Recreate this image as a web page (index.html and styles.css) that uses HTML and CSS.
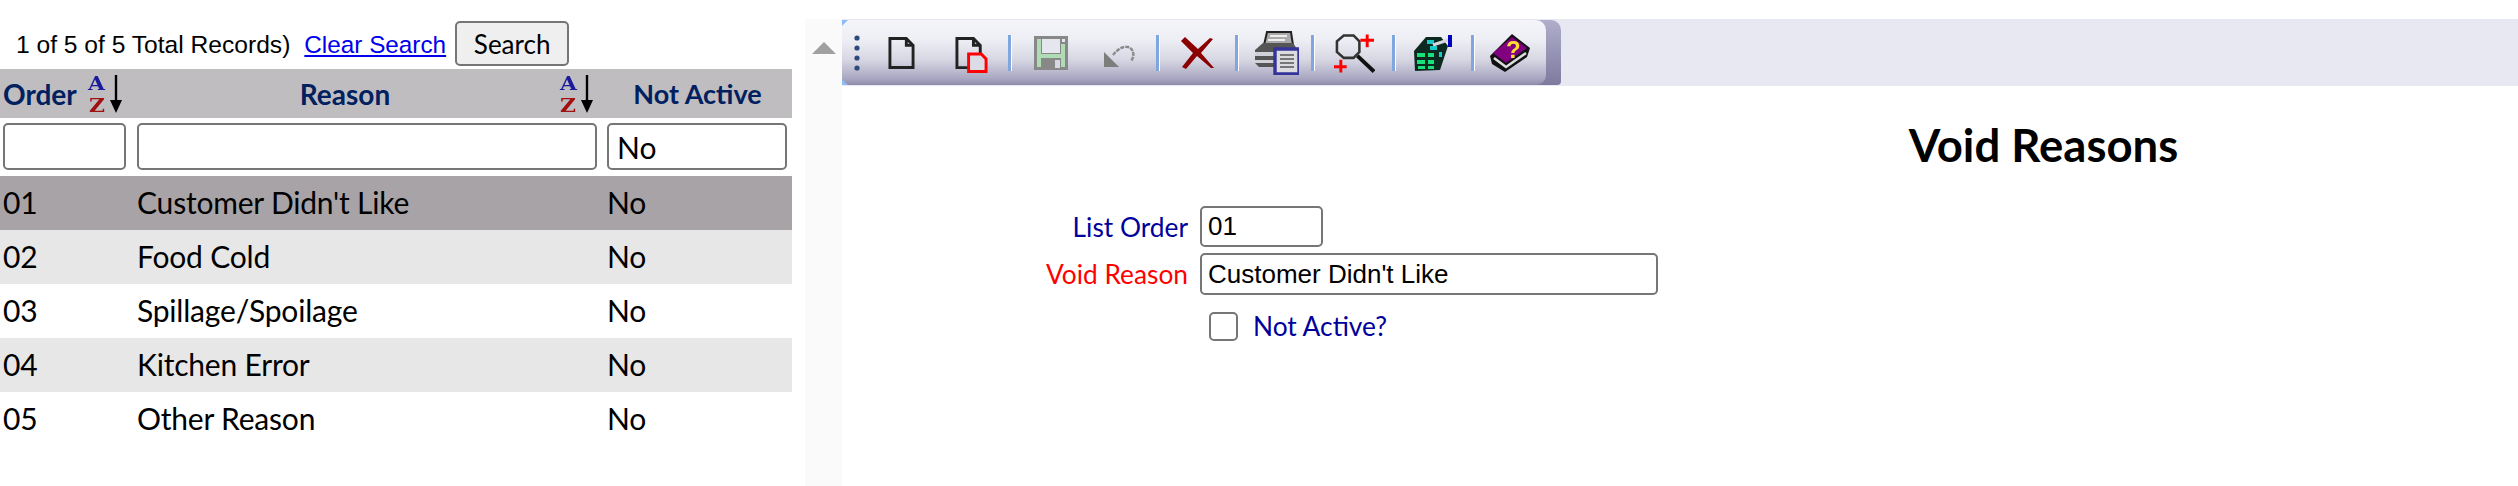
FILE: index.html
```html
<!DOCTYPE html>
<html lang="en">
<head>
  <meta charset="UTF-8" />
  <title>Void Reasons</title>
  <link rel="stylesheet" href="styles.css">
</head>
<body>

<div class="page">

  <!-- Search list -->
  <section class="list">
    <div class="status">
      <span class="count">1 of 5 of 5 Total Records)</span>
      <a href="#" class="clear">Clear Search</a>
      <button class="search-btn">Search</button>
    </div>

    <div class="row head">
      <div class="cell order-head">Order
        <span class="sort"><span class="sort-letters"><b class="sort-a">A</b><b class="sort-z">Z</b></span><svg class="sort-arrow" viewBox="0 0 14 38"><path d="M7 0V28" stroke="#000" stroke-width="2.4"/><path d="M1 25H13L7 38Z" fill="#000"/></svg></span>
      </div>
      <div class="cell reason-head"><span class="reason-text">Reason</span>
        <span class="sort"><span class="sort-letters"><b class="sort-a">A</b><b class="sort-z">Z</b></span><svg class="sort-arrow" viewBox="0 0 14 38"><path d="M7 0V28" stroke="#000" stroke-width="2.4"/><path d="M1 25H13L7 38Z" fill="#000"/></svg></span>
      </div>
      <div class="cell active-head">Not Active</div>
    </div>

    <div class="row filters">
      <input type="text" class="filter">
      <input type="text" class="filter">
      <input type="text" class="filter" value="No">
    </div>

    <div class="row item selected"><div class="cell">01</div><div class="cell">Customer Didn't Like</div><div class="cell">No</div></div>
    <div class="row item odd"><div class="cell">02</div><div class="cell">Food Cold</div><div class="cell">No</div></div>
    <div class="row item"><div class="cell">03</div><div class="cell">Spillage/Spoilage</div><div class="cell">No</div></div>
    <div class="row item odd"><div class="cell">04</div><div class="cell">Kitchen Error</div><div class="cell">No</div></div>
    <div class="row item"><div class="cell">05</div><div class="cell">Other Reason</div><div class="cell">No</div></div>
  </section>

  <!-- Scroll gutter -->
  <div class="gutter"><div class="arrow-up"></div></div>

  <!-- Detail -->
  <main class="detail">
    <div class="toolbar-band">
      <div class="toolbar">
        <div class="toolbar-face">
          <svg class="grip" viewBox="0 0 8 38"><circle cx="4" cy="4" r="2.6"/><circle cx="4" cy="14" r="2.6"/><circle cx="4" cy="24" r="2.6"/><circle cx="4" cy="34" r="2.6"/></svg>

          <svg class="tool t-new" viewBox="0 0 28 34"><path d="M2 2H19L26 9V32H2Z M19 2V9H26" fill="none" stroke="#222" stroke-width="3"/></svg>
          <svg class="tool t-copy" viewBox="0 0 34 38"><path d="M2 2H19L26 9V32H2Z M19 2V9H26" fill="none" stroke="#222" stroke-width="3"/><path d="M14 18H27L32 23V36H14Z" fill="#dcdce6" stroke="#f00" stroke-width="3"/></svg>
          <i class="sep s1"></i>
          <svg class="tool t-save" viewBox="0 0 34 34"><path d="M0 0H34V34H0Z" fill="#888"/><path d="M3 3H7V31H3Z M27 8H31V31H27Z M7 18H27V22H7Z" fill="#aedcb4"/><path d="M8 3H26V17H8Z" fill="#e6e6ef"/><path d="M28 3H31V6H28Z" fill="#e6e6ef"/><path d="M21 24H26V32H21Z" fill="#d8d8e0"/></svg>
          <svg class="tool t-undo" viewBox="0 0 32 24"><path d="M1 23V8L16 23Z" fill="#7d7d7d"/><path d="M10 11C14 6 19 2 25 3C31 5 32 12 28 17" fill="none" stroke="#8a8a8a" stroke-width="2.4" stroke-dasharray="4 1"/></svg>
          <i class="sep s2"></i>
          <svg class="tool t-del" viewBox="0 0 34 34"><path d="M4 1L17 13L29 2L32 3L20 17L33 32L30 32L16 20L5 33L1 31L12 17L0 5Z" fill="#8b0000"/></svg>
          <i class="sep s3"></i>
          <svg class="tool t-print" viewBox="0 0 44 44"><path d="M12 1H36L38 14H9Z" fill="#aaa" stroke="#222" stroke-width="2"/><path d="M15 5H32M13 9H30" stroke="#eee" stroke-width="2"/><path d="M0 19L8 12H38L42 18V36H4L0 32Z" fill="#555"/><path d="M0 21H22V25H0Z M0 29H22V32H0Z" fill="#d0d0d8"/><path d="M20 18H44V43H20Z" fill="#dcdce0" stroke="#333399" stroke-width="3.4"/><path d="M25 24H39M25 28H39M25 32H39M25 36H39" stroke="#777" stroke-width="2"/></svg>
          <i class="sep s4"></i>
          <svg class="tool t-find" viewBox="0 0 42 42"><path d="M10 3H20L26 9V20L20 26H10L3 20V9Z" fill="none" stroke="#333" stroke-width="2.6"/><path d="M24 24L41 40" stroke="#111" stroke-width="4"/><path d="M34 2V15M27 8H41" stroke="#f00" stroke-width="3"/><path d="M7 28V41M0 35H13" stroke="#f00" stroke-width="3"/></svg>
          <i class="sep s5"></i>
          <svg class="tool t-grid" viewBox="0 0 38 38"><path d="M0 17L12 3H27L34 12L26 36L1 37Z" fill="#0c2a20"/><path d="M3 19H11V23H3ZM14 19H20V23H14ZM3 26H11V30H3ZM14 26H20V30H14ZM4 32H11V35H4ZM14 32H20V35H14Z" fill="#19e07a"/><path d="M13 6H20V10H13ZM16 12H23V16H16ZM25 18H28V23H25Z" fill="#19c8c8"/><path d="M19 11L34 6" stroke="#d8d8e0" stroke-width="3"/><path d="M34 1H38V13H34Z" fill="#0000c0"/></svg>
          <i class="sep s6"></i>
          <svg class="tool t-help" viewBox="0 0 40 38"><path d="M0 22L22 0L40 14L37 23L15 38L2 30Z" fill="#111"/><path d="M3 19L22 3L37 14L16 29Z" fill="#800080"/><path d="M4 24L16 33L36 19" fill="none" stroke="#ddd" stroke-width="2.6"/><text x="16" y="24" class="help-mark">?</text></svg>
        </div>
      </div>
    </div>

    <h1 class="title">Void Reasons</h1>

    <form class="void-form">
      <label class="lbl">List Order</label>
      <input type="text" class="fld fld-order" value="01">
      <label class="lbl req">Void Reason</label>
      <input type="text" class="fld fld-reason" value="Customer Didn't Like">
      <div class="check-row">
        <input type="checkbox" class="chk">
        <label class="lbl">Not Active?</label>
      </div>
    </form>
  </main>

</div>

</body>
</html>
```

FILE: styles.css
```css
* { box-sizing: border-box; }
html, body { height: 100%; }
body {
  margin: 0;
  background: #fff;
  font-family: 'Lato', sans-serif;
  overflow: hidden;
}

.page {
  display: flex;
  height: 486px;
}

/* List side */
.list {
  width: 805px;
  padding-top: 20px;
  flex: none;
}

.status {
  display: flex;
  align-items: center;
  height: 49px;
  padding-left: 16px;
  width: 792px;
}

.count {
  font-family: 'Liberation Sans', sans-serif;
  font-size: 24.6px;
}

.clear {
  font-family: 'Liberation Sans', sans-serif;
  font-size: 24.3px;
  color: #00e;
  margin-left: 14px;
}

.search-btn {
  font-family: 'Lato', sans-serif;
  font-size: 26px;
  width: 114px;
  height: 45px;
  margin-left: 9px;
  margin-top: -2px;
  background: #efefef;
  border: 2px solid #767676;
  border-radius: 5px;
  padding: 0;
  color: #000;
}

.row {
  display: grid;
  grid-template-columns: 137px 470px 185px;
  width: 792px;
  align-items: center;
}

.cell {
  padding-left: 3px;
}

.head {
  height: 49px;
  background: #c0bdc0;
  color: #00205f;
  font-weight: bold;
  font-size: 28px;
}

.order-head {
  display: flex;
  align-items: center;
  gap: 11px;
}

.reason-head {
  display: flex;
  align-items: center;
  padding-left: 0;
}

.reason-text {
  width: 422px;
  padding-right: 6px;
  text-align: center;
}

.active-head {
  text-align: center;
  padding-left: 0;
  padding-right: 4px;
  font-size: 27px;
}

/* A-Z sort mark */
.sort {
  display: flex;
  align-items: center;
  gap: 3px;
  flex: none;
}

.sort-letters {
  display: flex;
  flex-direction: column;
  align-items: center;
  width: 18px;
}

.sort-a, .sort-z {
  font-family: 'DejaVu Serif', serif;
  font-weight: bold;
  font-size: 19px;
  line-height: 22px;
  transform: scaleX(1.15);
}

.sort-a { color: #1a1a9c; }
.sort-z { color: #a01010; }

.sort-arrow {
  width: 14px;
  height: 38px;
}

.filters {
  height: 58px;
  grid-template-columns: 134px 470px 188px;
  padding-left: 3px;
  padding-bottom: 1px;
}

.filter {
  height: 47px;
  border: 2px solid #767676;
  border-radius: 5px;
  font-family: 'Lato', sans-serif;
  font-size: 30px;
  padding: 0 8px;
}

.filters .filter:nth-child(1) { width: 123px; }
.filters .filter:nth-child(2) { width: 460px; }
.filters .filter:nth-child(3) { width: 180px; }

.item {
  height: 54px;
  font-size: 30px;
  letter-spacing: -0.2px;
  color: #000;
  padding-bottom: 2px;
}

.item .cell:nth-child(2) { padding-left: 0; }
.item .cell:nth-child(3) { padding-left: 0; }

.selected { background: #a8a3a6; }
.odd { background: #e7e7e7; }

/* Gutter */
.gutter {
  width: 37px;
  flex: none;
  margin-top: 19px;
  background: #fafafa;
  padding: 23px 0 0 7px;
}

.arrow-up {
  width: 0;
  height: 0;
  border-left: 12px solid transparent;
  border-right: 12px solid transparent;
  border-bottom: 12px solid #a0a0a0;
}

/* Detail side */
.detail {
  flex: 1;
  padding-top: 19px;
}

.toolbar-band {
  height: 67px;
  background: #e8e8f2;
  padding-top: 1px;
}

.toolbar {
  position: relative;
  width: 719px;
  height: 65px;
  background: linear-gradient(#b0aecb, #7d7a9e);
  border-radius: 2px 10px 4px 2px;
}

/* little blue corners on the left end */
.toolbar::before,
.toolbar::after {
  content: "";
  position: absolute;
  left: 0;
  width: 6px;
  height: 6px;
  background: #8ebcf2;
}

.toolbar::before { top: 0; clip-path: polygon(0 0, 100% 0, 0 100%); }
.toolbar::after { bottom: 0; clip-path: polygon(0 0, 100% 100%, 0 100%); }

.toolbar-face {
  display: flex;
  align-items: center;
  width: 704px;
  height: 100%;
  padding-left: 11px;
  background: linear-gradient(#f4f4fa 0%, #eeeef5 30%, #d8d8e4 60%, #a9a7c2 90%, #8e8cac 100%);
  border-radius: 0 10px 10px 0;
}

.grip {
  width: 8px;
  height: 38px;
  fill: #2c4a7c;
  flex: none;
}

.tool {
  flex: none;
  filter: blur(0.5px);
}

.t-new { width: 27px; height: 34px; margin-left: 27px; }
.t-copy { width: 33px; height: 38px; margin-left: 40px; margin-top: 4px; }
.t-save { width: 34px; height: 34px; margin-left: 23px; }
.t-undo { width: 32px; height: 24px; margin-left: 35px; margin-top: 6px; }
.t-del { width: 34px; height: 34px; margin-left: 22px; }
.t-print { width: 44px; height: 44px; margin-left: 17px; }
.t-find { width: 41px; height: 42px; margin-left: 20px; }
.t-grid { width: 38px; height: 38px; margin-left: 19px; }
.t-help { width: 40px; height: 38px; margin-left: 16px; }

.sep {
  width: 3px;
  height: 36px;
  flex: none;
  background: #7fa6de;
  box-shadow: 1px 0 0 #fff;
}

.s1 { margin-left: 20px; }
.s2 { margin-left: 21px; }
.s3 { margin-left: 20px; }
.s4 { margin-left: 12px; }
.s5 { margin-left: 17px; }
.s6 { margin-left: 19px; }

.help-mark {
  font-family: 'Liberation Sans', sans-serif;
  font-weight: bold;
  font-size: 24px;
  fill: #ffdd33;
}

.title {
  margin: 32px 0 0;
  padding-left: 727px;
  text-align: center;
  font-size: 45.5px;
  line-height: 54px;
  font-weight: bold;
  color: #000;
}

.void-form {
  display: grid;
  grid-template-columns: 200px 458px;
  column-gap: 12px;
  row-gap: 6px;
  margin: 34px 0 0 146px;
  align-items: center;
}

.lbl {
  font-size: 26.3px;
  color: #00009c;
  text-align: right;
}

.lbl.req { color: #f00; }

.fld {
  height: 41px;
  border: 2px solid #767676;
  border-radius: 5px;
  font-family: 'Liberation Sans', sans-serif;
  font-size: 26px;
  padding: 0 6px;
}

.fld-order { width: 123px; }
.fld-reason { width: 458px; height: 42px; }

.check-row {
  grid-column: 2;
  display: flex;
  align-items: center;
  margin-top: 9px;
  padding-left: 9px;
}

.chk {
  appearance: none;
  width: 29px;
  height: 29px;
  margin: 0 15px 0 0;
  border: 2px solid #767676;
  border-radius: 5px;
  background: #fff;
}
```
